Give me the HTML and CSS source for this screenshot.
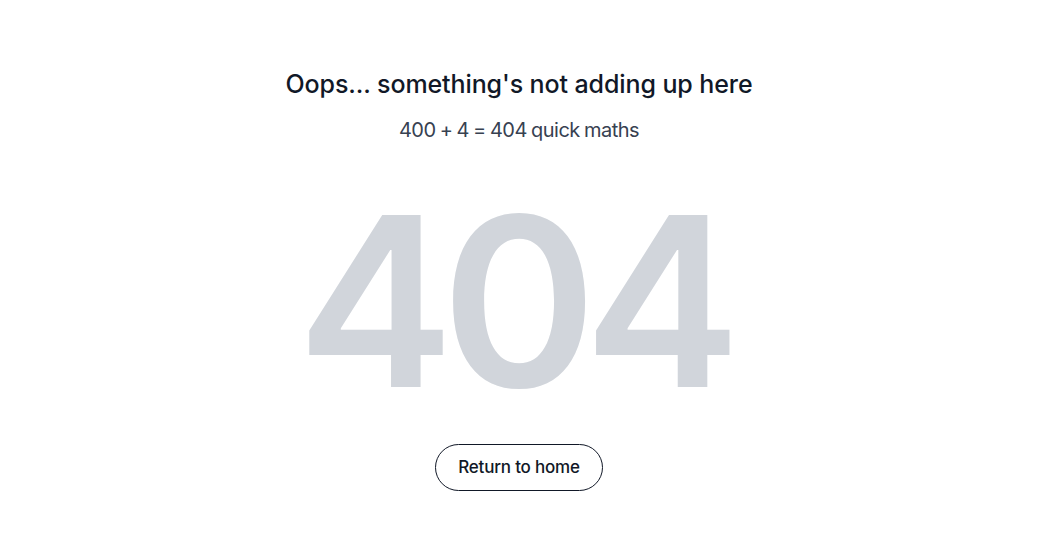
FILE: index.html
```html
<!DOCTYPE html>
<html lang="en">
<head>
    <meta charset="UTF-8">
    <meta name="viewport" content="width=device-width, initial-scale=1.0">
    <title>Page not found</title>
    <link rel="stylesheet" href="styles.css">
</head>
<body>
    <main class="not-found">
        <h1 class="title">Oops... something's not adding up here</h1>
        <p class="subtitle">400 + 4 = 404 quick maths</p>
        <div class="code">404</div>
        <a class="home-link" href="/">Return to home</a>
    </main>
</body>
</html>
```

FILE: styles.css
```css
:root {
    --text: #111827;
    --muted: #374151;
    --code: #d1d5db;
}
body {
    font-family: Inter, "Noto Sans", sans-serif;
    margin: 0;
    background-color: #fff;
    color: var(--text);
}
.not-found {
    display: flex;
    flex-direction: column;
    align-items: center;
    text-align: center;
    padding: 66px 17px 0 0;
}
.title {
    font-size: 25px;
    font-weight: 500;
    letter-spacing: -0.1px;
    margin: 0;
    line-height: 36px;
}
.subtitle {
    font-size: 20px;
    font-weight: 400;
    color: var(--muted);
    margin: 13px 0 0;
    line-height: 30px;
    letter-spacing: -0.5px;
    word-spacing: -1px;
}
.code {
    font-size: 236px;
    font-weight: 600;
    line-height: 1;
    color: var(--code);
    margin-top: 38px;
    letter-spacing: -13px;
    padding-right: 13px;
}
.home-link {
    display: inline-block;
    margin-top: 25px;
    padding: 12px 22px;
    border: 1px solid var(--text);
    border-radius: 999px;
    color: var(--text);
    text-decoration: none;
    font-size: 17px;
    line-height: 21px;
    font-weight: 500;
    letter-spacing: -0.2px;
}
```
